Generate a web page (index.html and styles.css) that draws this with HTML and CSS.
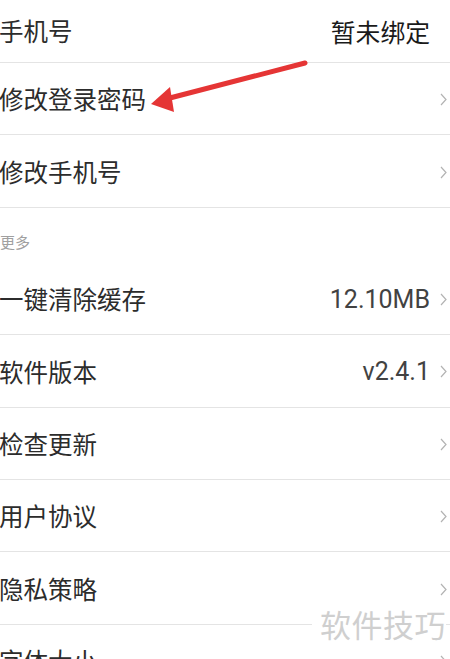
FILE: index.html
```html
<!DOCTYPE html>
<html lang="zh">
<head>
<meta charset="utf-8">
<link rel="stylesheet" href="styles.css">
</head>
<body>
<div class="page">
  <div class="list">
    <div class="row first">
      <span class="label">手机号</span>
      <span class="right"><span class="value dark">暂未绑定</span><span class="chev hidden"></span></span>
    </div>
    <div class="row">
      <span class="label">修改登录密码</span>
      <span class="right"><span class="chev"><svg width="7" height="13" viewBox="0 0 7 13"><path d="M1 1 L6 6.5 L1 12" fill="none" stroke="#b3b3b3" stroke-width="1.2"/></svg></span></span>
    </div>
    <div class="row">
      <span class="label">修改手机号</span>
      <span class="right"><span class="chev"><svg width="7" height="13" viewBox="0 0 7 13"><path d="M1 1 L6 6.5 L1 12" fill="none" stroke="#b3b3b3" stroke-width="1.2"/></svg></span></span>
    </div>
    <div class="section">更多</div>
    <div class="row">
      <span class="label">一键清除缓存</span>
      <span class="right"><span class="value num">12.10MB</span><span class="chev"><svg width="7" height="13" viewBox="0 0 7 13"><path d="M1 1 L6 6.5 L1 12" fill="none" stroke="#b3b3b3" stroke-width="1.2"/></svg></span></span>
    </div>
    <div class="row">
      <span class="label">软件版本</span>
      <span class="right"><span class="value num">v2.4.1</span><span class="chev"><svg width="7" height="13" viewBox="0 0 7 13"><path d="M1 1 L6 6.5 L1 12" fill="none" stroke="#b3b3b3" stroke-width="1.2"/></svg></span></span>
    </div>
    <div class="row">
      <span class="label">检查更新</span>
      <span class="right"><span class="chev"><svg width="7" height="13" viewBox="0 0 7 13"><path d="M1 1 L6 6.5 L1 12" fill="none" stroke="#b3b3b3" stroke-width="1.2"/></svg></span></span>
    </div>
    <div class="row">
      <span class="label">用户协议</span>
      <span class="right"><span class="chev"><svg width="7" height="13" viewBox="0 0 7 13"><path d="M1 1 L6 6.5 L1 12" fill="none" stroke="#b3b3b3" stroke-width="1.2"/></svg></span></span>
    </div>
    <div class="row">
      <span class="label">隐私策略</span>
      <span class="right"><span class="chev"><svg width="7" height="13" viewBox="0 0 7 13"><path d="M1 1 L6 6.5 L1 12" fill="none" stroke="#b3b3b3" stroke-width="1.2"/></svg></span></span>
    </div>
    <div class="row">
      <span class="label">字体大小</span>
      <span class="right"><span class="chev"><svg width="7" height="13" viewBox="0 0 7 13"><path d="M1 1 L6 6.5 L1 12" fill="none" stroke="#b3b3b3" stroke-width="1.2"/></svg></span></span>
    </div>
  </div>

  <svg class="arrow" width="450" height="140" viewBox="0 0 450 140">
    <line x1="305" y1="63" x2="166" y2="99" stroke="#e53535" stroke-width="5" stroke-linecap="round"/>
    <polygon points="151,104 170,87 174,112" fill="#e53535"/>
  </svg>

  <div class="watermark">软件技巧</div>
</div>
</body>
</html>
```

FILE: styles.css
```css
html, body {
  margin: 0;
  padding: 0;
  background: #ffffff;
}

body {
  font-family: "Noto Sans CJK SC", "Noto Sans", sans-serif;
  width: 450px;
  height: 659px;
  overflow: hidden;
}

.page {
  position: relative;
  width: 450px;
  height: 659px;
  overflow: hidden;
}

.list {
  display: flex;
  flex-direction: column;
}

.row {
  display: flex;
  flex: none;
  align-items: center;
  justify-content: space-between;
  border-bottom: 1px solid #e4e4e4;
  padding: 2px 3px 0 0;
  box-sizing: border-box;
  height: 72.4px;
}

.row.first {
  height: 63px;
  padding-top: 0;
}

.label {
  font-size: 24.5px;
  color: #2c2c2c;
  line-height: 1;
  margin-left: -1px;
}

.right {
  display: flex;
  align-items: center;
  gap: 10px;
}

.value {
  font-size: 24.5px;
  line-height: 1;
  color: #444444;
}

.value.dark {
  color: #1a1a1a;
  font-size: 24.8px;
}

.value.num {
  font-family: "Roboto", "Noto Sans", sans-serif;
  font-size: 25px;
  color: #424242;
}

.chev {
  display: flex;
  width: 7px;
  height: 13px;
}

.chev.hidden {
  visibility: hidden;
}

.section {
  flex: none;
  height: 55px;
  box-sizing: border-box;
  padding-top: 24px;
  font-size: 15px;
  line-height: 20px;
  color: #a0a0a0;
}

.arrow {
  position: absolute;
  left: 0;
  top: 0;
}

.watermark {
  position: absolute;
  right: 4px;
  top: 602px;
  padding: 0 0 0 8px;
  background: #ffffff;
  font-size: 31px;
  line-height: 44px;
  color: #cfcfcf;
  letter-spacing: 0.5px;
}
```
